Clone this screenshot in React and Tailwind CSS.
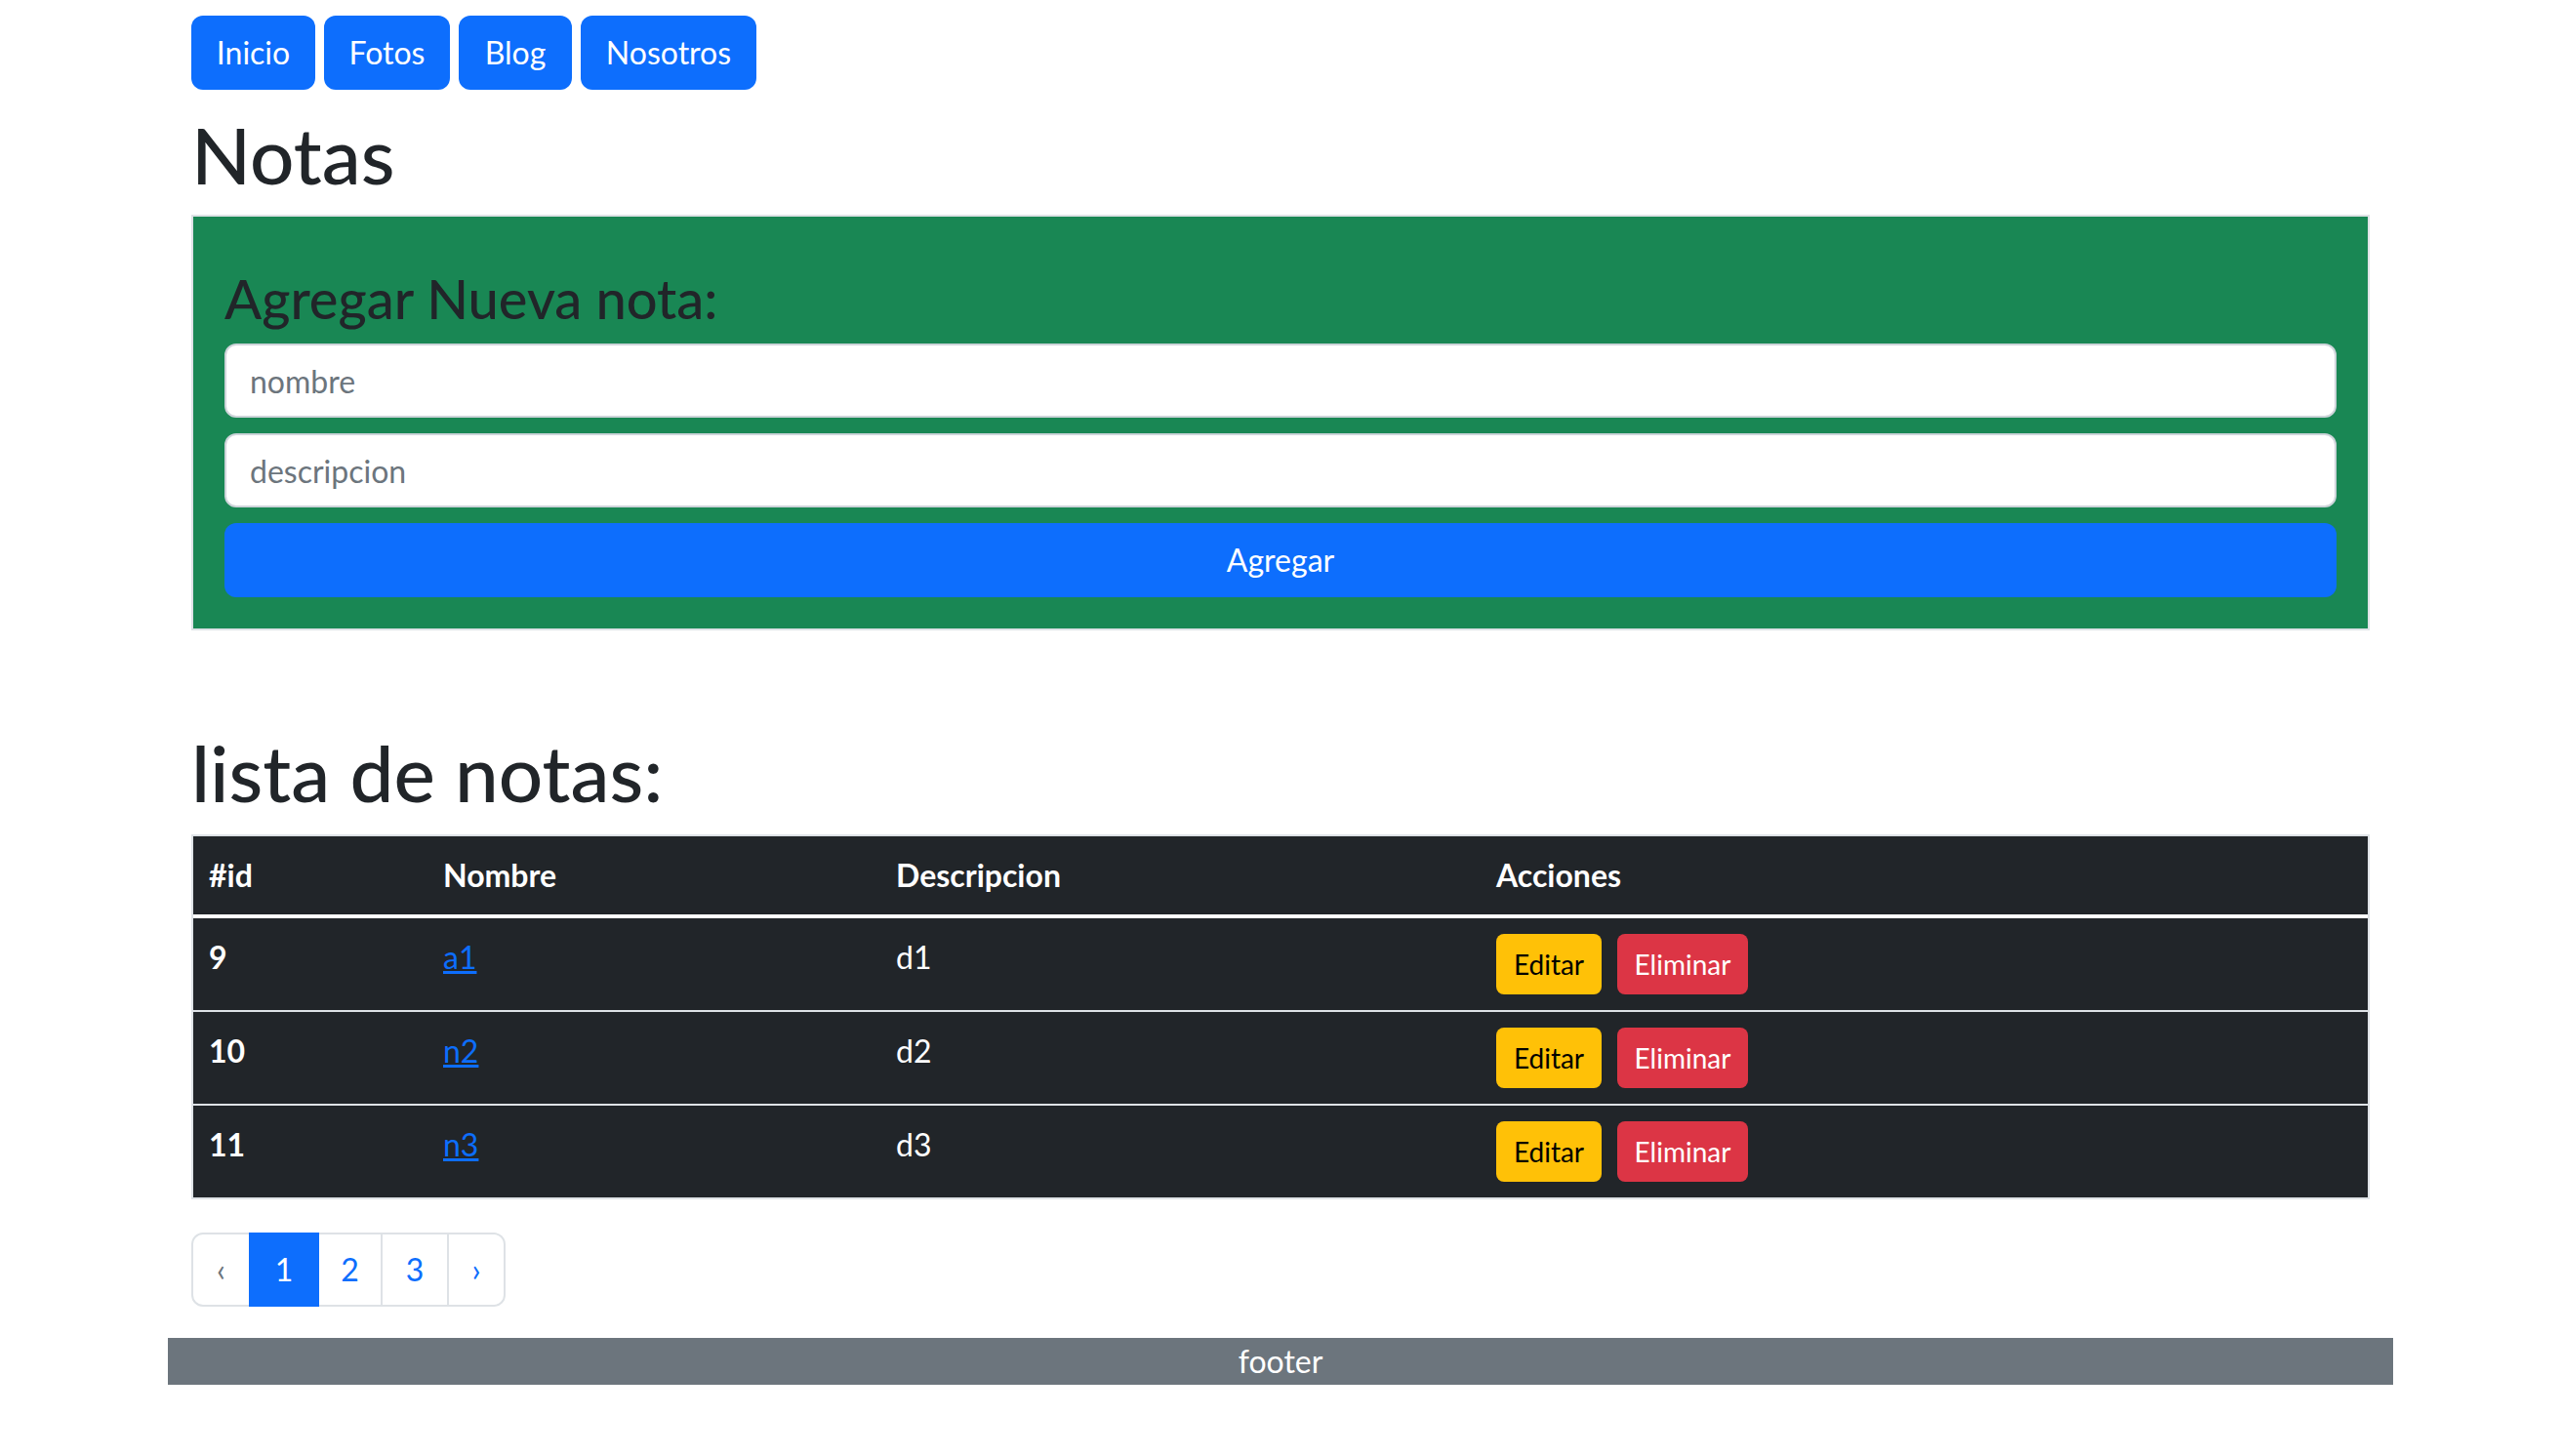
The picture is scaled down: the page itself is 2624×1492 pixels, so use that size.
import { useState } from "react";

const navLinks = [
  { label: "Inicio", width: "w-[127px]" },
  { label: "Fotos", width: "w-[129px]" },
  { label: "Blog", width: "w-[116px]" },
  { label: "Nosotros", width: "w-[180px]" },
];

const initialNotas = [
  { id: 9, nombre: "a1", descripcion: "d1" },
  { id: 10, nombre: "n2", descripcion: "d2" },
  { id: 11, nombre: "n3", descripcion: "d3" },
];

const App = () => {
  const [notas] = useState(initialNotas);
  const [nombre, setNombre] = useState("");
  const [descripcion, setDescripcion] = useState("");
  const [page, setPage] = useState(1);

  return (
    <div className="min-h-screen bg-white font-['Lato','Noto_Sans',sans-serif] text-[#212529]">
      <div className="mx-auto w-[2280px]">
        <div className="px-[24px]">
          {/* Nav */}
          <nav className="flex gap-[9px] pt-[16px]">
            {navLinks.map((link) => (
              <a
                key={link.label}
                href="#"
                className={`${link.width} flex h-[76px] items-center justify-center rounded-[12px] bg-[#0d6efd] text-[32px] leading-[48px] text-white`}
              >
                {link.label}
              </a>
            ))}
          </nav>

          <h1 className="mt-[18px] text-[80px] font-medium leading-[96px]">
            Notas
          </h1>

          {/* Formulario */}
          <form
            className="mt-[14px] border-2 border-[#dee2e6] bg-[#198754] px-[32px] pb-[32px] pt-[50px]"
            onSubmit={(e) => e.preventDefault()}
          >
            <h3 className="text-[56px] font-medium leading-[67px]">
              Agregar Nueva nota:
            </h3>
            <input
              type="text"
              placeholder="nombre"
              value={nombre}
              onChange={(e) => setNombre(e.target.value)}
              className="mt-[13px] block h-[76px] w-full rounded-[12px] border-2 border-[#ced4da] bg-white px-[24px] text-[32px] text-[#212529] outline-none placeholder:text-[#6c757d]"
            />
            <input
              type="text"
              placeholder="descripcion"
              value={descripcion}
              onChange={(e) => setDescripcion(e.target.value)}
              className="mt-[16px] block h-[76px] w-full rounded-[12px] border-2 border-[#ced4da] bg-white px-[24px] text-[32px] text-[#212529] outline-none placeholder:text-[#6c757d]"
            />
            <button
              type="submit"
              className="mt-[16px] block h-[76px] w-full rounded-[12px] bg-[#0d6efd] text-[32px] text-white"
            >
              Agregar
            </button>
          </form>

          <h1 className="mt-[97px] text-[80px] font-medium leading-[96px]">
            lista de notas:
          </h1>

          {/* Tabla */}
          <table className="mt-[16px] w-full table-fixed border-separate border-spacing-0 border-2 border-[#dee2e6] bg-[#212529] text-[32px] leading-[48px] text-white">
            <colgroup>
              <col className="w-[240px]" />
              <col className="w-[464px]" />
              <col className="w-[615px]" />
              <col />
            </colgroup>
            <thead>
              <tr>
                {["#id", "Nombre", "Descripcion", "Acciones"].map((h) => (
                  <th
                    key={h}
                    className="border-b-4 border-white px-[16px] py-[16px] text-left font-bold"
                  >
                    {h}
                  </th>
                ))}
              </tr>
            </thead>
            <tbody>
              {notas.map((nota, i) => {
                const line =
                  i < notas.length - 1 ? "border-b-2 border-[#dee2e6]" : "";
                return (
                  <tr key={nota.id}>
                    <th
                      className={`${line} px-[16px] py-[16px] text-left align-top font-bold`}
                    >
                      {nota.id}
                    </th>
                    <td className={`${line} px-[16px] py-[16px] align-top`}>
                      <a href="#" className="text-[#0d6efd] underline">
                        {nota.nombre}
                      </a>
                    </td>
                    <td className={`${line} px-[16px] py-[16px] align-top`}>
                      {nota.descripcion}
                    </td>
                    <td className={`${line} px-[16px] py-[16px] align-top`}>
                      <div className="flex gap-[16px]">
                        <button className="flex h-[62px] w-[108px] items-center justify-center rounded-[8px] bg-[#ffc107] text-[28px] text-black">
                          Editar
                        </button>
                        <button className="flex h-[62px] w-[134px] items-center justify-center rounded-[8px] bg-[#dc3545] text-[28px] text-white">
                          Eliminar
                        </button>
                      </div>
                    </td>
                  </tr>
                );
              })}
            </tbody>
          </table>

          {/* Paginacion */}
          <ul className="mt-[34px] flex text-[32px]">
            <li className="flex h-[76px] w-[61px] items-center justify-center rounded-l-[12px] border-2 border-[#dee2e6] text-[#6c757d]">
              ‹
            </li>
            {[1, 2, 3].map((n, i) => (
              <li
                key={n}
                onClick={() => setPage(n)}
                className={`-ml-[2px] flex h-[76px] cursor-pointer items-center justify-center border-2 ${
                  i === 0 ? "w-[72px]" : i === 1 ? "w-[67px]" : "w-[70px]"
                } ${
                  page === n
                    ? "relative z-10 border-[#0d6efd] bg-[#0d6efd] text-white"
                    : "border-[#dee2e6] text-[#0d6efd]"
                }`}
              >
                {n}
              </li>
            ))}
            <li className="-ml-[2px] flex h-[76px] w-[60px] items-center justify-center rounded-r-[12px] border-2 border-[#dee2e6] text-[#0d6efd]">
              ›
            </li>
          </ul>
        </div>

        <footer className="mt-[32px] bg-[#6c757d] text-center text-[32px] leading-[48px] text-white">
          footer
        </footer>
      </div>
    </div>
  );
};

export default App;
